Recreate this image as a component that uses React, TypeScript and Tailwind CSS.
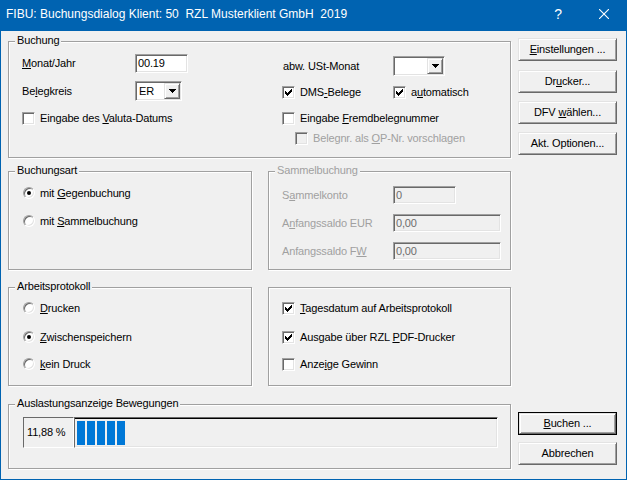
import type { ReactNode } from "react";

const sunken =
  "border border-t-[#a0a0a0] border-l-[#a0a0a0] border-b-white border-r-white shadow-[inset_1px_1px_0_#696969,inset_-1px_-1px_0_#e3e3e3]";
const raised =
  "border border-t-[#e3e3e3] border-l-[#e3e3e3] border-b-[#696969] border-r-[#696969] shadow-[inset_1px_1px_0_#fff,inset_-1px_-1px_0_#a0a0a0]";

function Group({
  title,
  disabled,
  className = "",
  children,
}: {
  title?: string;
  disabled?: boolean;
  className?: string;
  children?: ReactNode;
}) {
  return (
    <div className={`relative border border-[#a0a0a0] shadow-[inset_1px_1px_0_#fff,1px_1px_0_#fff] ${className}`}>
      {title && (
        <span
          className={`absolute left-[6px] top-[-8px] bg-[#f0f0f0] px-[2px] leading-[13px] ${
            disabled ? "text-[#a0a0a0]" : ""
          }`}
        >
          {title}
        </span>
      )}
      {children}
    </div>
  );
}

function Check({ checked, disabled }: { checked?: boolean; disabled?: boolean }) {
  return (
    <span
      className={`flex h-[13px] w-[13px] shrink-0 items-center justify-center ${sunken} ${
        disabled ? "bg-[#f0f0f0]" : "bg-white"
      }`}
    >
      {checked && (
        <svg width="7" height="7" viewBox="0 0 7 7" shapeRendering="crispEdges">
          <path d="M0 2h1v1h1v1h1v-1h1v-1h1v-1h1v-1h1v3h-1v1h-1v1h-1v1h-1v1h-1v-1h-1v-1h-1v-1h-1z" fill="#000" />
        </svg>
      )}
    </span>
  );
}

function Radio({ checked }: { checked?: boolean }) {
  return (
    <span className="flex h-3 w-3 shrink-0 items-center justify-center rounded-full border border-t-[#a0a0a0] border-l-[#a0a0a0] border-b-white border-r-white bg-white shadow-[inset_1px_1px_0_#696969,inset_-1px_-1px_0_#e3e3e3]">
      {checked && <span className="h-1 w-1 rounded-full bg-black" />}
    </span>
  );
}

function Arrow() {
  return (
    <svg width="7" height="4" viewBox="0 0 7 4" shapeRendering="crispEdges">
      <path d="M0 0h7v1h-1v1h-1v1h-1v1h-1v-1h-1v-1h-1v-1h-1z" fill="#000" />
    </svg>
  );
}

function Select({ value, w }: { value?: string; w: string }) {
  return (
    <div className={`flex h-[20px] ${w} bg-white ${sunken} p-px`}>
      <span className="flex-1 pl-[2px] leading-[16px]">{value}</span>
      <span className={`flex w-[16px] items-center justify-center bg-[#f0f0f0] ${raised}`}>
        <Arrow />
      </span>
    </div>
  );
}

function Btn({ children, def }: { children: ReactNode; def?: boolean }) {
  return (
    <div className={`flex h-[23px] w-[99px] ${def ? "border border-black" : ""}`}>
      <button className={`flex flex-1 items-center justify-center bg-[#f0f0f0] ${raised}`}>{children}</button>
    </div>
  );
}

function CheckRow({
  checked,
  disabled,
  children,
  className = "",
}: {
  checked?: boolean;
  disabled?: boolean;
  children: ReactNode;
  className?: string;
}) {
  return (
    <div className={`flex h-[13px] items-center ${className}`}>
      <Check checked={checked} disabled={disabled} />
      <span className={`ml-[5px] ${disabled ? "text-[#a0a0a0]" : ""}`}>{children}</span>
    </div>
  );
}

function RadioRow({ checked, children, className = "" }: { checked?: boolean; children: ReactNode; className?: string }) {
  return (
    <div className={`flex h-[14px] items-center ${className}`}>
      <Radio checked={checked} />
      <span className="ml-[5px]">{children}</span>
    </div>
  );
}

export default function App() {
  return (
    <div className="flex h-[480px] w-[627px] flex-col bg-[#0063b1] font-['Liberation_Sans',Arial,sans-serif] text-[11px] leading-[13px] tracking-[-0.15px] text-black">
      {/* title bar */}
      <div className="flex h-[31px] shrink-0 items-center text-white">
        <span className="flex-1 whitespace-pre pl-[6px] pb-[3px] text-[12px] tracking-normal">
          FIBU: Buchungsdialog Klient: 50  RZL Musterklient GmbH  2019
        </span>
        <span className="flex h-full w-[46px] items-center justify-center pb-[3px] text-[14px] font-light">?</span>
        <span className="flex h-full w-[46px] items-center justify-center pb-[3px]">
          <svg width="10" height="10" viewBox="0 0 10 10">
            <path d="M0 0L10 10M10 0L0 10" stroke="#fff" strokeWidth="1.1" />
          </svg>
        </span>
      </div>

      <div className="mx-px mb-px flex flex-1 bg-[#f0f0f0] pl-[7px]">
        {/* left column */}
        <div className="flex w-[503px] flex-col pt-[10px]">
          <Group title="Buchung" className="flex h-[117px]">
            <div className="flex w-[273px] flex-col pl-[13px] pt-[12px]">
              <div className="flex h-[19px] items-center">
                <span className="w-[113px]">
                  <u>M</u>onat/Jahr
                </span>
                <div className={`h-[19px] w-[53px] bg-white pl-[2px] leading-[17px] ${sunken}`}>00.19</div>
              </div>
              <div className="mt-[8px] flex h-[20px] items-center">
                <span className="w-[113px]">
                  Be<u>l</u>egkreis
                </span>
                <Select value="ER" w="w-[47px]" />
              </div>
              <CheckRow className="mt-[11px]">
                Eingabe des <u>V</u>aluta-Datums
              </CheckRow>
            </div>
            <div className="flex flex-1 flex-col pt-[14px]">
              <div className="flex h-[20px] items-center">
                <span className="w-[111px] pl-px">abw. USt-Monat</span>
                <Select w="w-[52px]" />
              </div>
              <div className="mt-[10px] flex h-[13px] items-center">
                <Check checked />
                <span className="ml-[5px] w-[93px]">
                  DMS<u>-</u>Belege
                </span>
                <Check checked />
                <span className="ml-[5px]">
                  a<u>u</u>tomatisch
                </span>
              </div>
              <CheckRow className="mt-[13px]">
                Eingabe <u>F</u>remdbelegnummer
              </CheckRow>
              <CheckRow disabled className="mt-[7px] pl-[13px]">
                Belegnr. als <u>O</u>P-Nr. vorschlagen
              </CheckRow>
            </div>
          </Group>

          <div className="mt-[13px] flex gap-[16px]">
            <Group title="Buchungsart" className="h-[99px] w-[244px] pl-[14px] pt-[14px]">
              <RadioRow checked>
                mit <u>G</u>egenbuchung
              </RadioRow>
              <RadioRow className="mt-[14px]">
                mit <u>S</u>ammelbuchung
              </RadioRow>
            </Group>
            <Group title="Sammelbuchung" disabled className="h-[99px] flex-1 pl-[13px] pt-[14px] text-[#a0a0a0]">
              {[
                { l: <>S<u>a</u>mmelkonto</>, v: "0", w: "w-[63px]" },
                { l: <>A<u>n</u>fangssaldo EUR</>, v: "0,00", w: "w-[108px]" },
                { l: <>Anfangssaldo F<u>W</u></>, v: "0,00", w: "w-[108px]" },
              ].map((r, i) => (
                <div key={i} className={`flex h-[18px] items-center ${i ? "mt-[10px]" : ""}`}>
                  <span className="w-[111px]">{r.l}</span>
                  <div className={`h-[18px] ${r.w} bg-[#f0f0f0] pl-[2px] leading-[16px] text-[#6d6d6d] ${sunken}`}>{r.v}</div>
                </div>
              ))}
            </Group>
          </div>

          <div className="mt-[17px] flex gap-[16px]">
            <Group title="Arbeitsprotokoll" className="h-[99px] w-[244px] pl-[14px] pt-[13px]">
              <RadioRow>
                <u>D</u>rucken
              </RadioRow>
              <RadioRow checked className="mt-[15px]">
                <u>Z</u>wischenspeichern
              </RadioRow>
              <RadioRow className="mt-[13px]">
                <u>k</u>ein Druck
              </RadioRow>
            </Group>
            <Group className="h-[99px] flex-1 pl-[13px] pt-[13px]">
              <div className="flex h-[14px] items-center">
                <Check checked />
                <span className="ml-[5px]">
                  <u>T</u>agesdatum auf Arbeitsprotokoll
                </span>
              </div>
              <div className="mt-[15px] flex h-[14px] items-center">
                <Check checked />
                <span className="ml-[5px]">
                  Ausgabe über RZL <u>P</u>DF-Drucker
                </span>
              </div>
              <div className="mt-[13px] flex h-[14px] items-center">
                <Check />
                <span className="ml-[5px]">
                  Anze<u>i</u>ge Gewinn
                </span>
              </div>
            </Group>
          </div>

          <Group title="Auslastungsanzeige Bewegungen" className="mt-[18px] h-[65px] pl-[14px] pt-[12px]">
            <div className="flex h-[31px]">
              <div className="flex w-[51px] items-center border border-t-[#696969] border-l-[#696969] border-b-white border-r-white pl-[3px]">
                11,88 %
              </div>
              <div className="flex w-[424px] gap-[2px] border border-t-[#696969] border-l-[#696969] border-b-white border-r-white pl-[2px] pt-[3px] pb-[2px] shadow-[inset_0_1px_0_#000,inset_-1px_-1px_0_#e3e3e3]">
                {[0, 1, 2, 3, 4].map((i) => (
                  <span key={i} className="h-[24px] w-[8px] bg-[#0078d7]" />
                ))}
              </div>
            </div>
          </Group>
        </div>

        {/* right column */}
        <div className="ml-[7px] flex w-[99px] flex-col pt-[7px] pb-[14px]">
          <Btn>
            <span>
              <u>E</u>instellungen ...
            </span>
          </Btn>
          <div className="mt-[9px]">
            <Btn>
              <span>
                Dr<u>u</u>cker...
              </span>
            </Btn>
          </div>
          <div className="mt-[8px]">
            <Btn>
              <span>
                DFV <u>w</u>ählen...
              </span>
            </Btn>
          </div>
          <div className="mt-[8px]">
            <Btn>
              <span>Akt. Optionen...</span>
            </Btn>
          </div>
          <div className="mt-auto">
            <Btn def>
              <span>
                <u>B</u>uchen ...
              </span>
            </Btn>
          </div>
          <div className="mt-[7px]">
            <Btn>
              <span>Abbrechen</span>
            </Btn>
          </div>
        </div>
      </div>
    </div>
  );
}
